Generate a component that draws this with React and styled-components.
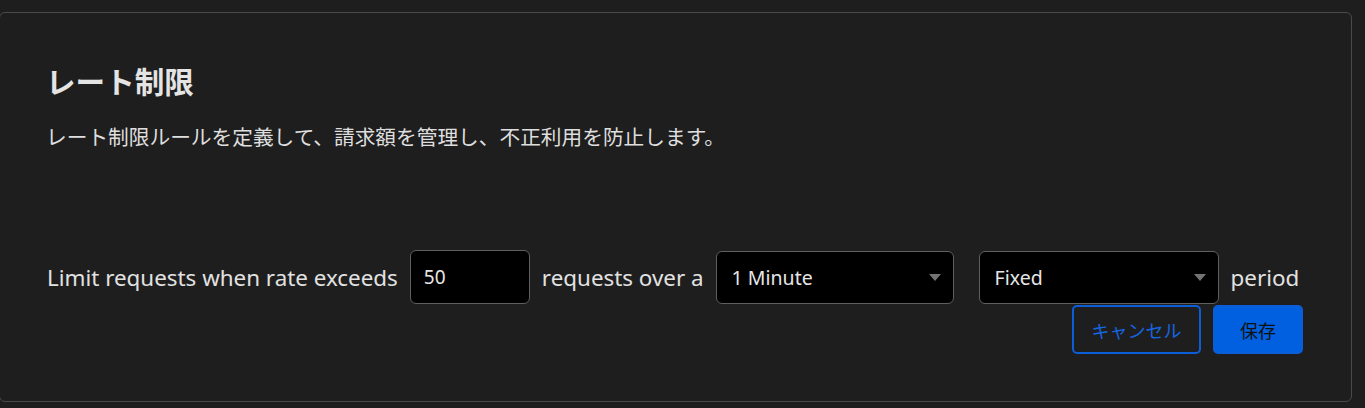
import React from "react";
import styled, { createGlobalStyle } from "styled-components";

const GlobalStyle = createGlobalStyle`
  html, body {
    margin: 0;
    background: #1e1e1e;
  }
  body {
    font-family: "Noto Sans", "Noto Sans CJK JP", sans-serif;
    color: #e2e2e2;
  }
`;

const Page = styled.div`
  padding: 12px 13px 6px 0;
  margin-left: -1px;
`;

const Card = styled.section`
  background: #1e1e1e;
  border: 1px solid #4a4a4a;
  border-radius: 6px;
  height: 390px;
  box-sizing: border-box;
  padding: 50px 48px 0 47px;
  display: flex;
  flex-direction: column;
`;

const Title = styled.h2`
  margin: 0 0 0 -1px;
  font-family: "Noto Sans CJK JP", sans-serif;
  font-size: 29.6px;
  line-height: 35px;
  font-weight: 700;
  color: #e4e4e4;
`;

const Description = styled.p`
  margin: 23px 0 0 -1px;
  font-family: "Noto Sans CJK JP", sans-serif;
  font-size: 20.7px;
  line-height: 30px;
  color: #dedede;
`;

const RuleRow = styled.div`
  margin-top: 99px;
  display: flex;
  align-items: center;
  gap: 12px;
  font-size: 22.4px;
  color: #e2e2e2;
`;

const Label = styled.span`
  white-space: nowrap;
`;

const NumberInput = styled.input`
  width: 120px;
  height: 54px;
  box-sizing: border-box;
  background: #000;
  border: 1px solid #5f5f5f;
  border-radius: 6px;
  color: #e6e6e6;
  font-family: "Noto Sans", sans-serif;
  font-size: 19px;
  padding: 0 13px;
  outline: none;
`;

const Select = styled.div`
  width: ${(p) => p.$width}px;
  margin-left: ${(p) => (p.$spaced ? 13 : 0)}px;
  height: 53px;
  box-sizing: border-box;
  background: #000;
  border: 1px solid #5f5f5f;
  border-radius: 6px;
  display: flex;
  align-items: center;
  justify-content: space-between;
  padding: 0 12px 0 15px;
  font-size: 19.5px;
  color: #e6e6e6;
`;

const Caret = styled.span`
  width: 0;
  height: 0;
  border-left: 6.5px solid transparent;
  border-right: 6.5px solid transparent;
  border-top: 7px solid #737373;
`;

const Actions = styled.div`
  display: flex;
  justify-content: flex-end;
  gap: 12px;
  margin-top: 1px;
`;

const Button = styled.button`
  height: 49px;
  box-sizing: border-box;
  border-radius: 5px;
  font-family: "Noto Sans CJK JP", sans-serif;
  font-size: 18px;
  cursor: pointer;
  border: 2px solid #0b5ed7;
  background: ${(p) => (p.$primary ? "#0060df" : "transparent")};
  color: ${(p) => (p.$primary ? "#111" : "#1565e0")};
  width: ${(p) => p.$width}px;
`;

function App() {
  return (
    <Page>
      <GlobalStyle />
      <Card>
        <Title>レート制限</Title>
        <Description>
          レート制限ルールを定義して、請求額を管理し、不正利用を防止します。
        </Description>
        <RuleRow>
          <Label>Limit requests when rate exceeds</Label>
          <NumberInput type="text" defaultValue="50" />
          <Label>requests over a</Label>
          <Select $width={238}>
            1 Minute
            <Caret />
          </Select>
          <Select $width={240} $spaced>
            Fixed
            <Caret />
          </Select>
          <Label>period</Label>
        </RuleRow>
        <Actions>
          <Button $width={129}>キャンセル</Button>
          <Button $width={90} $primary>
            保存
          </Button>
        </Actions>
      </Card>
    </Page>
  );
}

export default App;
